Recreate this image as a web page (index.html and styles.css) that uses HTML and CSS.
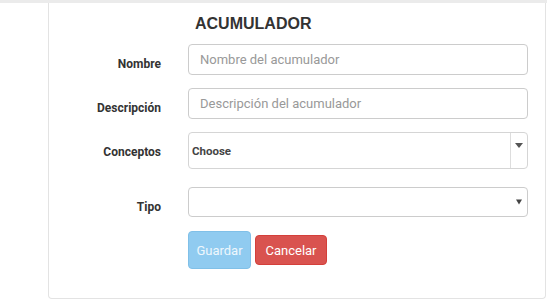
FILE: index.html
```
<!DOCTYPE html>
<html lang="es">

<head>
    <meta charset="UTF-8">
    <meta name="viewport" content="width=device-width, initial-scale=1.0">
    <title>Acumulador</title>
    <link rel="stylesheet" href="styles.css">
</head>

<body>
    <div class="topbar"></div>

    <div class="panel">
        <h2 class="title">ACUMULADOR</h2>

        <form class="form">
            <div class="row">
                <label class="label" for="nombre">Nombre</label>
                <input class="field" id="nombre" type="text" placeholder="Nombre del acumulador">
            </div>

            <div class="row">
                <label class="label" for="descripcion">Descripción</label>
                <input class="field" id="descripcion" type="text" placeholder="Descripción del acumulador">
            </div>

            <div class="row">
                <label class="label">Conceptos</label>
                <div class="chooser">
                    <span class="chooser-text">Choose</span>
                    <span class="chooser-toggle">
                        <svg width="8" height="5" viewBox="0 0 8 5"><path d="M0 0 H8 L4 5 Z" fill="#555"/></svg>
                    </span>
                </div>
            </div>

            <div class="row row-tipo">
                <label class="label">Tipo</label>
                <div class="select">
                    <svg width="6" height="6" viewBox="0 0 6 6"><path d="M0 0.5 H6 L3 5.5 Z" fill="#444"/></svg>
                </div>
            </div>

            <div class="row row-last">
                <div class="label"></div>
                <div class="actions">
                    <button type="button" class="btn btn-save">Guardar</button>
                    <button type="button" class="btn btn-cancel">Cancelar</button>
                </div>
            </div>
        </form>
    </div>
</body>

</html>
```

FILE: styles.css
```
body {
    margin: 0;
    background-color: #ffffff;
    font-family: Roboto, 'Liberation Sans', sans-serif;
    color: #333333;
}

.topbar {
    height: 3px;
    background-color: #ebebeb;
}

.panel {
    margin-left: 48px;
    width: 496px;
    border: 1px solid #e3e3e3;
    border-top: none;
    border-radius: 0 0 4px 4px;
    padding-bottom: 29px;
}

.title {
    margin: 0;
    padding: 11px 0 0 146px;
    font-family: 'Liberation Sans', Arial, sans-serif;
    font-size: 16px;
    line-height: 20px;
    font-weight: bold;
    color: #333333;
}

.form {
    margin-top: 10px;
}

.row {
    display: flex;
    align-items: flex-start;
    gap: 27px;
    margin-bottom: 13px;
}

.row-tipo {
    margin-top: 18px;
    margin-bottom: 14px;
}

.row-last {
    margin-bottom: 0;
}

.label {
    width: 112px;
    flex: none;
    text-align: right;
    font-size: 12px;
    line-height: 14px;
    font-weight: bold;
    color: #333333;
    padding-top: 13px;
}

.field {
    box-sizing: border-box;
    width: 340px;
    height: 31px;
    margin: 0;
    padding: 0 11px;
    border: 1px solid #cccccc;
    border-radius: 4px;
    font-family: Roboto, sans-serif;
    font-size: 13px;
    color: #555555;
    outline: none;
}

.field::placeholder {
    color: #999999;
}

.chooser {
    box-sizing: border-box;
    width: 340px;
    height: 37px;
    display: flex;
    border: 1px solid #d5d5d5;
    border-radius: 4px;
}

.chooser-text {
    flex: 1;
    align-self: center;
    padding-left: 3px;
    font-size: 11.5px;
    font-weight: bold;
    color: #444444;
}

.chooser-toggle {
    width: 17px;
    border-left: 1px solid #dddddd;
    display: flex;
    justify-content: center;
    padding-top: 10px;
    box-sizing: border-box;
}

.select {
    box-sizing: border-box;
    width: 340px;
    height: 30px;
    border: 1px solid #cccccc;
    border-radius: 4px;
    display: flex;
    align-items: center;
    justify-content: flex-end;
    padding-right: 5px;
}

.actions {
    display: flex;
    align-items: center;
    gap: 4px;
}

.btn {
    font-family: Roboto, sans-serif;
    font-size: 13px;
    border-radius: 4px;
    border: 1px solid transparent;
    margin: 0;
}

.btn-save {
    width: 63px;
    height: 38px;
    padding: 0;
    background-color: #90cbf0;
    border-color: #80c0e8;
    color: #eef7fd;
}

.btn-cancel {
    width: 72px;
    height: 30px;
    padding: 0;
    background-color: #d9534f;
    border-color: #d43f3a;
    color: #ffffff;
}
```
